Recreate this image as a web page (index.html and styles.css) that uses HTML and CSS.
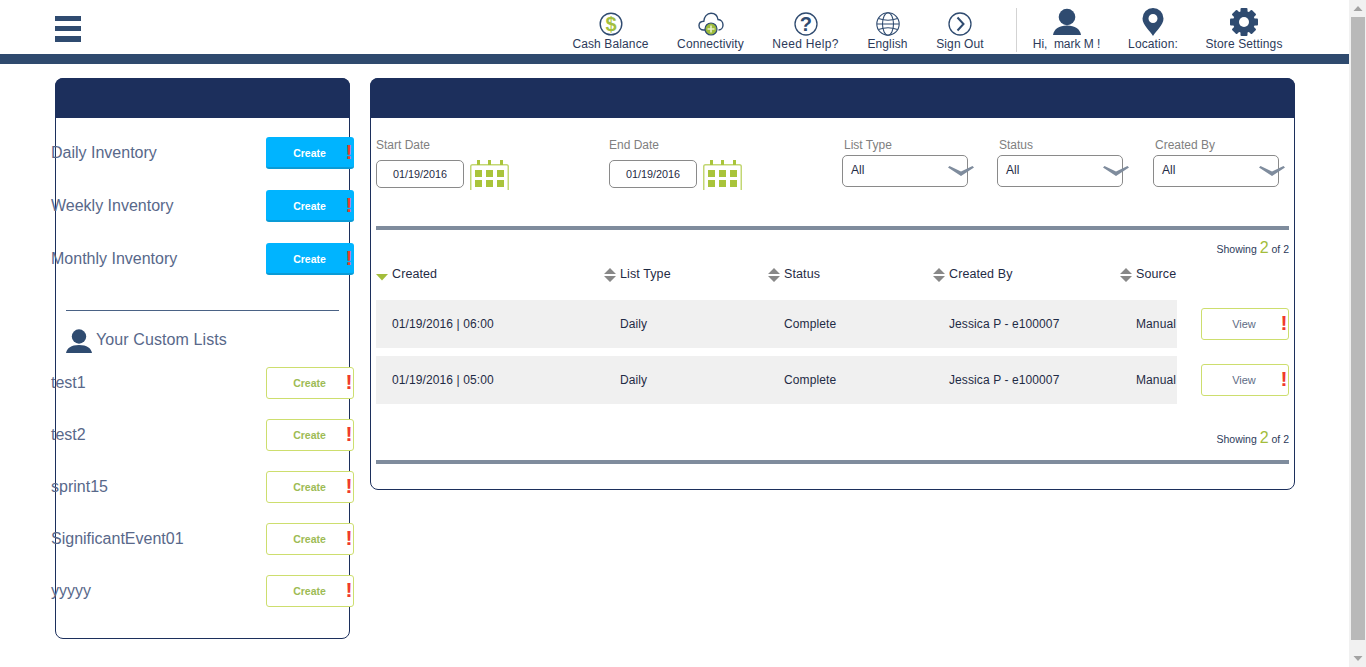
FILE: index.html
```html
<!DOCTYPE html>
<html lang="en">
<head>
<meta charset="utf-8">
<title>Inventory</title>
<link rel="stylesheet" href="styles.css">
</head>
<body>
<div class="page">
  <div class="content">
    <header class="topbar">
      <div class="burger"><span></span><span></span><span></span></div>
      <nav class="nav">
        <div class="nav-item w77"><div class="nav-icon"><svg width="24" height="24" viewBox="0 0 24 24"><circle cx="12" cy="12" r="10.800" fill="none" stroke="#2f4b70" stroke-width="1.400"/><text x="12" y="19" text-anchor="middle" class="dollar">$</text></svg></div><span>Cash Balance</span></div>
        <div class="nav-item w67"><div class="nav-icon"><svg width="26" height="24" viewBox="0 0 26 24"><path d="M7 18H5.500C3 18 1 16 1 13.500S3 9.300 5.800 9.200C6 5 9 1.200 13 1.200c3.800 0 6.500 2.500 7 6.300 3 .2 5 2.800 5 5.500 0 2.800-2 5-4.500 5" fill="none" stroke="#2f4b70" stroke-width="1.400"/><circle cx="13" cy="17" r="6" fill="#9dbb3c" stroke="#2f4b70" stroke-width="1.200"/><path d="M13 13.500v7M9.500 17h7" stroke="#e8f0c8" stroke-width="1.600"/></svg></div><span>Connectivity</span></div>
        <div class="nav-item w67"><div class="nav-icon"><svg width="24" height="24" viewBox="0 0 24 24"><circle cx="12" cy="12" r="11" fill="none" stroke="#2f4b70" stroke-width="1.300"/><text x="12" y="19" text-anchor="middle" class="qmark">?</text></svg></div><span class="wide">Need Help?</span></div>
        <div class="nav-item w41"><div class="nav-icon"><svg width="24" height="24" viewBox="0 0 24 24"><g fill="none" stroke="#2f4b70" stroke-width="1.100"><circle cx="12" cy="12" r="11.200"/><ellipse cx="12" cy="12" rx="5.500" ry="11.200"/><path d="M1 12h22M2.500 6.500c5.500 2 13.500 2 19 0M2.500 17.500c5.500-2 13.500-2 19 0"/></g></svg></div><span>English</span></div>
        <div class="nav-item w48"><div class="nav-icon"><svg width="24" height="24" viewBox="0 0 24 24"><circle cx="12" cy="12" r="11" fill="none" stroke="#2f4b70" stroke-width="1.300"/><path d="M9.500 5.500L15.500 12l-6 6.500" fill="none" stroke="#2f4b70" stroke-width="2"/></svg></div><span>Sign Out</span></div>
        <div class="nav-sep"></div>
        <div class="nav-item w67"><div class="nav-icon"><svg width="28" height="28" viewBox="0 0 28 28"><circle cx="14" cy="9" r="8.300" fill="#2f4b70"/><path d="M0 27c1-6 6-9.500 14-9.500S27 21 28 27z" fill="#2f4b70"/></svg></div><span class="tight">Hi,&nbsp; mark M !</span></div>
        <div class="nav-item w50"><div class="nav-icon"><svg width="22" height="28" viewBox="0 0 22 28"><path fill-rule="evenodd" d="M11 28C8 23 .5 17 .5 10.500a10.500 10.500 0 0 1 21 0C21.500 17 14 23 11 28zM11 6a4.500 4.500 0 1 0 0 9 4.500 4.500 0 0 0 0-9z" fill="#2f4b70"/></svg></div><span>Location:</span></div>
        <div class="nav-item w76"><div class="nav-icon"><svg width="28" height="28" viewBox="0 0 28 28"><g fill="#2f4b70"><circle cx="14" cy="14" r="11"/><rect x="10.500" width="7" height="28" rx="1"/><rect x="10.500" width="7" height="28" rx="1" transform="rotate(45 14 14)"/><rect x="10.500" width="7" height="28" rx="1" transform="rotate(90 14 14)"/><rect x="10.500" width="7" height="28" rx="1" transform="rotate(135 14 14)"/></g><circle cx="14" cy="14" r="5" fill="#fff"/></svg></div><span>Store Settings</span></div>
      </nav>
    </header>
    <div class="strip"></div>

    <main class="columns">
      <aside class="panel side">
        <div class="panel-head"></div>
        <div class="side-group">
          <div class="side-row"><span class="side-label">Daily Inventory</span><button class="btn btn-blue">Create<i class="bang">!</i></button></div>
          <div class="side-row"><span class="side-label">Weekly Inventory</span><button class="btn btn-blue">Create<i class="bang">!</i></button></div>
          <div class="side-row"><span class="side-label">Monthly Inventory</span><button class="btn btn-blue">Create<i class="bang">!</i></button></div>
        </div>
        <div class="side-rule"></div>
        <div class="custom-head">
          <svg width="26" height="24" viewBox="0 0 26 24"><circle cx="13" cy="7.500" r="7.200" fill="#2f4b70"/><path d="M0 24c1-5 5-8 13-8s12 3 13 8z" fill="#2f4b70"/></svg>
          <span>Your Custom Lists</span>
        </div>
        <div class="side-group custom">
          <div class="side-row"><span class="side-label">test1</span><button class="btn btn-green">Create<i class="bang">!</i></button></div>
          <div class="side-row"><span class="side-label">test2</span><button class="btn btn-green">Create<i class="bang">!</i></button></div>
          <div class="side-row"><span class="side-label">sprint15</span><button class="btn btn-green">Create<i class="bang">!</i></button></div>
          <div class="side-row"><span class="side-label">SignificantEvent01</span><button class="btn btn-green">Create<i class="bang">!</i></button></div>
          <div class="side-row"><span class="side-label">yyyyy</span><button class="btn btn-green">Create<i class="bang">!</i></button></div>
        </div>
      </aside>

      <section class="panel list">
        <div class="panel-head"></div>
        <div class="list-body">
          <div class="filters">
            <div class="filter"><label>Start Date</label><div class="date-row"><div class="date-input">01/19/2016</div><svg class="cal" width="39" height="30" viewBox="0 0 39 30"><path d="M.75 30V6.500Q.75 4.750 2.500 4.750h34q1.750 0 1.750 1.750V30" fill="none" stroke="#c3d774" stroke-width="1.500"/><g fill="#a9c43a"><rect x="7" width="3" height="5"/><rect x="18" width="3" height="5"/><rect x="30" width="3" height="5"/><rect x="5" y="10" width="7" height="7"/><rect x="16" y="10" width="7" height="7"/><rect x="27" y="10" width="7" height="7"/><rect x="5" y="20" width="7" height="7"/><rect x="16" y="20" width="7" height="7"/><rect x="27" y="20" width="7" height="7"/></g></svg></div></div>
            <div class="filter"><label>End Date</label><div class="date-row"><div class="date-input">01/19/2016</div><svg class="cal" width="39" height="30" viewBox="0 0 39 30"><path d="M.75 30V6.500Q.75 4.750 2.500 4.750h34q1.750 0 1.750 1.750V30" fill="none" stroke="#c3d774" stroke-width="1.500"/><g fill="#a9c43a"><rect x="7" width="3" height="5"/><rect x="18" width="3" height="5"/><rect x="30" width="3" height="5"/><rect x="5" y="10" width="7" height="7"/><rect x="16" y="10" width="7" height="7"/><rect x="27" y="10" width="7" height="7"/><rect x="5" y="20" width="7" height="7"/><rect x="16" y="20" width="7" height="7"/><rect x="27" y="20" width="7" height="7"/></g></svg></div></div>
            <div class="filter"><label class="sel-label">List Type</label><div class="select"><span>All</span><svg class="chev" width="26" height="10" viewBox="0 0 26 10"><path d="M0 1.500L1.500 0 13 5.500 24.500 0 26 1.500 13 10z" fill="#7f8c9d"/></svg></div></div>
            <div class="filter"><label class="sel-label">Status</label><div class="select"><span>All</span><svg class="chev" width="26" height="10" viewBox="0 0 26 10"><path d="M0 1.500L1.500 0 13 5.500 24.500 0 26 1.500 13 10z" fill="#7f8c9d"/></svg></div></div>
            <div class="filter"><label class="sel-label">Created By</label><div class="select"><span>All</span><svg class="chev" width="26" height="10" viewBox="0 0 26 10"><path d="M0 1.500L1.500 0 13 5.500 24.500 0 26 1.500 13 10z" fill="#7f8c9d"/></svg></div></div>
          </div>
          <div class="rule"></div>
          <div class="showing">Showing <b>2</b> of 2</div>
          <div class="grid grid-head">
            <div class="th"><svg class="sort" width="12" height="8" viewBox="0 0 12 8"><path d="M0 1h12L6 7.500z" fill="#a3bd3b"/></svg>Created</div>
            <div class="th"><svg class="sort" width="12" height="14" viewBox="0 0 12 14"><path d="M6 0l6 6H0zM0 8h12l-6 6z" fill="#888"/></svg>List Type</div>
            <div class="th"><svg class="sort" width="12" height="14" viewBox="0 0 12 14"><path d="M6 0l6 6H0zM0 8h12l-6 6z" fill="#888"/></svg>Status</div>
            <div class="th"><svg class="sort" width="12" height="14" viewBox="0 0 12 14"><path d="M6 0l6 6H0zM0 8h12l-6 6z" fill="#888"/></svg>Created By</div>
            <div class="th"><svg class="sort" width="12" height="14" viewBox="0 0 12 14"><path d="M6 0l6 6H0zM0 8h12l-6 6z" fill="#888"/></svg>Source</div>
          </div>
          <div class="tr">
            <div class="grid cells"><div>01/19/2016 | 06:00</div><div>Daily</div><div>Complete</div><div>Jessica P - e100007</div><div>Manual</div></div>
            <button class="btn btn-view">View<i class="bang">!</i></button>
          </div>
          <div class="tr">
            <div class="grid cells"><div>01/19/2016 | 05:00</div><div>Daily</div><div>Complete</div><div>Jessica P - e100007</div><div>Manual</div></div>
            <button class="btn btn-view">View<i class="bang">!</i></button>
          </div>
          <div class="showing lower">Showing <b>2</b> of 2</div>
          <div class="rule tail"></div>
        </div>
      </section>
    </main>
  </div>
  <div class="scrollbar">
    <svg width="17" height="17" viewBox="0 0 17 17"><path d="M4.500 11L9 6l4.500 5z" fill="#a3a3a3"/></svg>
    <div class="thumb"></div>
    <svg width="17" height="17" viewBox="0 0 17 17"><path d="M4.500 6L9 11l4.500-5z" fill="#a3a3a3"/></svg>
  </div>
</div>
</body>
</html>
```
FILE: styles.css
```css
* { box-sizing: border-box; }
html, body { margin: 0; height: 667px; overflow: hidden; background: #fff; }
body { font-family: "Liberation Sans", Arial, sans-serif; color: #1f2b45; }
.page { display: flex; height: 667px; }
.content { flex: 1; min-width: 0; }

.topbar { height: 54px; display: flex; justify-content: space-between; padding: 0 67px 0 55px; }
.burger { width: 26px; padding-top: 16px; display: flex; flex-direction: column; gap: 5px; }
.burger span { height: 5px; background: #2f4b70; }
.burger span:last-child { height: 6px; }
.nav { display: flex; gap: 28px; }
.nav-item { flex: none; display: flex; flex-direction: column; align-items: center; padding-top: 8px; font-size: 12px; line-height: 14px; letter-spacing: .12px; color: #2c3a5a; white-space: nowrap; }
.nav-item .wide { letter-spacing: .3px; }
.nav-item .tight { letter-spacing: -.05px; }
.w41 { width: 41px; }
.w48 { width: 48px; }
.w50 { width: 50px; }
.w67 { width: 67px; }
.w76 { width: 76px; }
.w77 { width: 77px; }
.nav-icon { height: 28px; margin-bottom: 1px; display: flex; align-items: flex-end; justify-content: center; }
.dollar { font: bold 20px "Liberation Sans", sans-serif; fill: #a3bf3e; }
.qmark { font: bold 20px "Liberation Sans", sans-serif; fill: #2f4b70; }
.nav-sep { flex: none; width: 1px; height: 44px; margin: 8px -12px 0 4px; background: #d3d3d3; }
.strip { height: 10px; background: #2f4a6e; }

.columns { display: flex; align-items: flex-start; gap: 20px; padding: 14px 0 0 55px; }
.panel { border: 1px solid #1c2f5c; border-radius: 8px; background: #fff; }
.panel-head { height: 40px; margin: -1px -1px 0; background: #1c2f5c; border-radius: 8px 8px 0 0; }
.side { width: 295px; height: 561px; }
.list { width: 925px; height: 412px; }

.side-group { display: flex; flex-direction: column; gap: 21px; margin: 19px -5px 0 -5px; }
.side-group.custom { gap: 20px; margin-top: 14px; }
.side-row { display: flex; justify-content: space-between; align-items: center; height: 32px; }
.side-label { font-size: 16px; color: #58688a; }
.side-rule { height: 1px; margin: 35px 10px 0; background: #4a6285; }
.custom-head { display: flex; align-items: flex-end; gap: 4px; margin: 18px 10px 0; height: 24px; font-size: 16px; letter-spacing: .1px; color: #58688a; }
.custom-head span { line-height: 22px; padding-bottom: 2px; }

.btn { position: relative; width: 88px; height: 32px; padding: 0 1px 0 0; border-radius: 3px; font: bold 10.500px "Liberation Sans", sans-serif; cursor: pointer; }
.btn-blue { background: #00b4ff; border: 0; border-bottom: 2px solid #0a9bd6; padding-top: 2px; color: #fff; }
.btn-green { background: #fff; border: 1px solid #cdde6e; color: #9dbb55; }
.btn-view { background: #fff; border: 1px solid #cdde6e; color: #5e6c85; font-weight: normal; margin-left: 24px; font-size: 11px; padding-right: 2px; }
.bang { position: absolute; right: 0; top: 3px; width: 8px; font: bold 21px/22px "Liberation Sans", sans-serif; color: #f03a2c; }
.btn-blue .bang { right: 1px; top: 4px; }

.list-body { padding: 0 5px; }
.filters { display: grid; grid-template-columns: 233px 233px 155px 156px 126px; padding-top: 20px; }
.filter label { display: block; font-size: 12px; line-height: 14px; color: #808080; }
.filter .sel-label { padding-left: 2px; }
.date-row { display: flex; align-items: flex-start; gap: 6px; margin-top: 8px; }
.date-input { width: 88px; height: 28px; border: 1px solid #8a8a8a; border-radius: 5px; font-size: 10.800px; line-height: 26px; text-align: center; color: #1f2b45; }
.cal { display: block; }
.select { position: relative; width: 126px; height: 32px; margin-top: 3px; border: 1px solid #8a8a8a; border-radius: 5px; padding-left: 8px; font-size: 12px; line-height: 28px; color: #1f2b45; }
.chev { position: absolute; left: 105px; top: 10px; }

.rule { height: 4px; background: #7f8c9d; }
.filters + .rule { margin-top: 36px; }
.showing { margin-top: 10px; height: 16px; text-align: right; font-size: 10.500px; line-height: 16px; color: #2c3a5a; }
.showing b { font-weight: normal; font-size: 16px; color: #a3bd3b; }
.showing.lower { margin-top: 26px; }
.rule.tail { margin-top: 14px; }

.grid { display: grid; grid-template-columns: 244px 164px 165px 187px 41px; }
.grid-head { margin-top: 11px; height: 33px; font-size: 12.500px; letter-spacing: .1px; line-height: 14px; color: #1f2b45; }
.th { position: relative; }
.sort { position: absolute; left: -16px; top: 1px; }
.th:first-child { padding-left: 16px; }
.th:first-child .sort { left: 0; top: 6px; }
.tr { display: flex; align-items: center; margin-bottom: 8px; height: 48px; }
.cells { width: 801px; height: 48px; background: #f0f0f0; align-items: center; font-size: 12px; letter-spacing: .1px; color: #1f2b45; }
.cells > div { white-space: nowrap; }
.cells > div:first-child { padding-left: 16px; }

.scrollbar { width: 17px; height: 667px; background: #f1f1f1; display: flex; flex-direction: column; }
.thumb { flex: 1; width: 14px; margin: 0 0 10px 2px; background: #b9b9b9; }
```
